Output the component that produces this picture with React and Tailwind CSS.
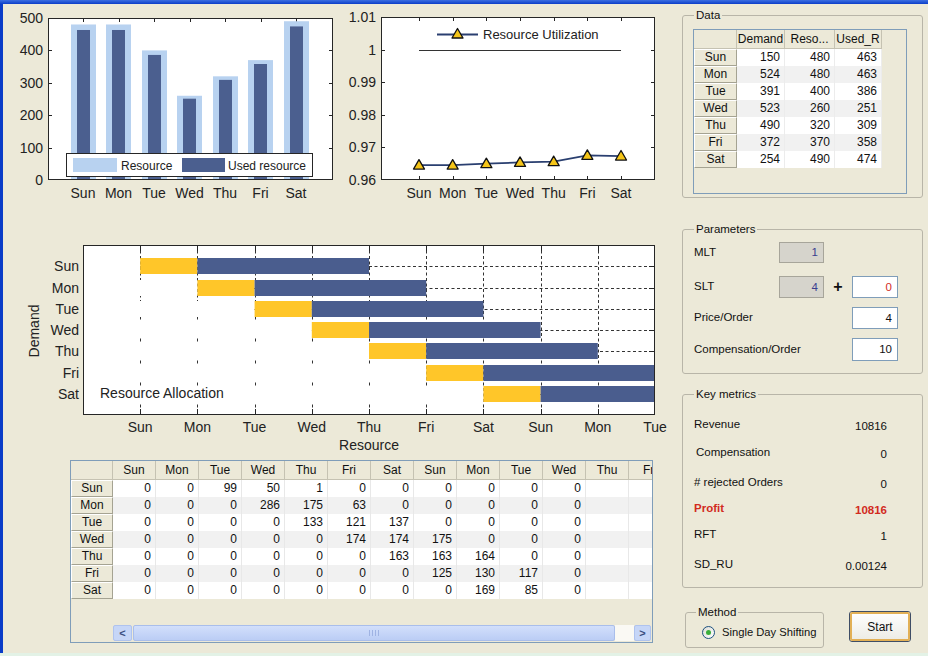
import React from "react";

const DAYS = ["Sun", "Mon", "Tue", "Wed", "Thu", "Fri", "Sat"];
const RESOURCE = [480, 480, 400, 260, 320, 370, 490];
const USED = [463, 463, 386, 251, 309, 358, 474];
const DEMAND = [150, 524, 391, 523, 490, 372, 254];

const ALLOC = [
  [0, 0, 99, 50, 1, 0, 0, 0, 0, 0, 0],
  [0, 0, 0, 286, 175, 63, 0, 0, 0, 0, 0],
  [0, 0, 0, 0, 133, 121, 137, 0, 0, 0, 0],
  [0, 0, 0, 0, 0, 174, 174, 175, 0, 0, 0],
  [0, 0, 0, 0, 0, 0, 163, 163, 164, 0, 0],
  [0, 0, 0, 0, 0, 0, 0, 125, 130, 117, 0],
  [0, 0, 0, 0, 0, 0, 0, 0, 169, 85, 0],
];
const ALLOC_COLS = ["Sun", "Mon", "Tue", "Wed", "Thu", "Fri", "Sat", "Sun", "Mon", "Tue", "Wed", "Thu", "Fri"];

const AXIS = "#262626";
const INK = "#222";
const px = (v) => Math.round(v) + 0.5;

function BarChart() {
  const L = 48, R = 333, T = 18, B = 180;
  const y = (v) => B - (v * (B - T)) / 500;
  const cx = (i) => 83 + i * 35.5;
  return (
    <svg width={337} height={201} viewBox="3 4 337 201" className="block shrink-0">
      <rect x={L} y={T} width={R - L} height={B - T} fill="#fff" />
      {[100, 200, 300, 400].map((v) => (
        <g key={v} stroke={AXIS}>
          <line x1={L} x2={L + 4} y1={px(y(v))} y2={px(y(v))} />
          <line x1={R - 4} x2={R} y1={px(y(v))} y2={px(y(v))} />
        </g>
      ))}
      {DAYS.map((d, i) => (
        <line key={d} x1={px(cx(i))} x2={px(cx(i))} y1={T} y2={T + 4} stroke={AXIS} />
      ))}
      {RESOURCE.map((v, i) => (
        <rect key={"r" + i} x={Math.round(cx(i) - 12.5)} y={y(v)} width={25} height={B - y(v)} fill="#B8D2F0" />
      ))}
      {USED.map((v, i) => (
        <rect key={"u" + i} x={Math.round(cx(i) - 6.5)} y={y(v)} width={13} height={B - y(v)} fill="#4B5F8F" />
      ))}
      {/* legend */}
      <rect x={66.5} y={153.5} width={246} height={23} fill="#fff" stroke={AXIS} />
      <rect x={73} y={158} width={44} height={14} fill="#B8D2F0" />
      <text x={121} y={170} fontSize={12} fill={INK}>Resource</text>
      <rect x={182} y={158} width={43} height={14} fill="#4B5F8F" />
      <text x={228} y={170} fontSize={12} fill={INK}>Used resource</text>
      <rect x={L + 0.5} y={T + 0.5} width={R - L - 1} height={B - T - 1} fill="none" stroke={AXIS} />
      {[0, 100, 200, 300, 400, 500].map((v) => (
        <text key={v} x={43} y={y(v) + 5} fontSize={14} fill={INK} textAnchor="end">{v}</text>
      ))}
      {DAYS.map((d, i) => (
        <text key={d} x={cx(i)} y={198} fontSize={14} fill={INK} textAnchor="middle">{d}</text>
      ))}
    </svg>
  );
}

function Marker({ x, y }) {
  return (
    <polygon
      points={`${x},${y - 5.5} ${x - 5.5},${y + 4} ${x + 5.5},${y + 4}`}
      fill="#F5C518"
      stroke="#111"
      strokeWidth={1.3}
      strokeLinejoin="round"
    />
  );
}

function LineChart() {
  const L = 381, R = 655, T = 17, B = 180;
  const y = (v) => B - ((v - 0.96) / 0.05) * (B - T);
  const cx = (i) => 419 + i * 33.67;
  const util = USED.map((v, i) => v / RESOURCE[i]);
  const ticks = [0.96, 0.97, 0.98, 0.99, 1, 1.01];
  const pts = util.map((u, i) => `${cx(i)},${y(u)}`).join(" ");
  return (
    <svg width={332} height={201} viewBox="340 4 332 201" className="block shrink-0">
      <rect x={L} y={T} width={R - L} height={B - T} fill="#fff" />
      {ticks.slice(1, 5).map((v) => (
        <g key={v} stroke={AXIS}>
          <line x1={L} x2={L + 4} y1={px(y(v))} y2={px(y(v))} />
          <line x1={R - 4} x2={R} y1={px(y(v))} y2={px(y(v))} />
        </g>
      ))}
      {DAYS.map((d, i) => (
        <g key={d} stroke={AXIS}>
          <line x1={px(cx(i))} x2={px(cx(i))} y1={T} y2={T + 4} />
          <line x1={px(cx(i))} x2={px(cx(i))} y1={B - 4} y2={B} />
        </g>
      ))}
      <line x1={cx(0)} x2={cx(6)} y1={px(y(1))} y2={px(y(1))} stroke="#333" />
      <polyline points={pts} fill="none" stroke="#2A3F70" strokeWidth={1.8} />
      {util.map((u, i) => (
        <Marker key={i} x={cx(i)} y={y(u)} />
      ))}
      {/* legend */}
      <line x1={437} x2={478} y1={34.5} y2={34.5} stroke="#2A3F70" strokeWidth={1.8} />
      <Marker x={457.5} y={34} />
      <text x={483} y={39} fontSize={13} fill={INK}>Resource Utilization</text>
      <rect x={L + 0.5} y={T + 0.5} width={R - L - 1} height={B - T - 1} fill="none" stroke={AXIS} />
      {ticks.map((v) => (
        <text key={v} x={376} y={y(v) + 5} fontSize={14} fill={INK} textAnchor="end">{String(v)}</text>
      ))}
      {DAYS.map((d, i) => (
        <text key={d} x={cx(i)} y={198} fontSize={14} fill={INK} textAnchor="middle">{d}</text>
      ))}
    </svg>
  );
}

function Gantt() {
  const L = 83, R = 655, T = 245, B = 415;
  const X = (u) => L + (u * (R - L)) / 10;
  const Y = (r) => T + (r * (B - T)) / 8;
  const H = 16;
  const xTicks = ["Sun", "Mon", "Tue", "Wed", "Thu", "Fri", "Sat", "Sun", "Mon", "Tue"];
  const inner = [1, 2, 3, 4, 5, 6, 7, 8, 9];
  return (
    <svg width={669} height={250} viewBox="3 205 669 250" className="block shrink-0">
      <defs>
        <clipPath id="gantt-plot">
          <rect x={L} y={T} width={R - L} height={B - T} />
        </clipPath>
      </defs>
      <rect x={L} y={T} width={R - L} height={B - T} fill="#fff" />
      <g clipPath="url(#gantt-plot)">
        {inner.map((u) => (
          <line key={"v" + u} x1={px(X(u))} x2={px(X(u))} y1={T} y2={B} stroke="#333" strokeDasharray="3 2.5" />
        ))}
        {DAYS.map((d, i) => (
          <line key={"h" + d} x1={L} x2={R} y1={px(Y(i + 1))} y2={px(Y(i + 1))} stroke="#333" strokeDasharray="3 2.5" />
        ))}
        {inner.map((u) => (
          <g key={"t" + u} stroke={AXIS}>
            <line x1={px(X(u))} x2={px(X(u))} y1={T} y2={T + 6} />
            <line x1={px(X(u))} x2={px(X(u))} y1={B - 6} y2={B} />
          </g>
        ))}
        {DAYS.map((d, i) => (
          <line key={"rt" + d} x1={R - 6} x2={R} y1={px(Y(i + 1))} y2={px(Y(i + 1))} stroke={AXIS} />
        ))}
        {DAYS.map((d, i) => {
          const r = i + 1;
          const top = Math.round(Y(r) - H / 2);
          return (
            <g key={"b" + d}>
              <rect x={L} y={top} width={X(r) - L} height={H} fill="#fff" />
              <rect x={X(r)} y={top} width={X(r + 1) - X(r)} height={H} fill="#FFC629" />
              <rect x={X(r + 1)} y={top} width={X(r + 4) - X(r + 1)} height={H} fill="#4A5D8E" />
            </g>
          );
        })}
      </g>
      <text x={100} y={398} fontSize={14} fill={INK}>Resource Allocation</text>
      <rect x={L + 0.5} y={T + 0.5} width={R - L - 1} height={B - T - 1} fill="none" stroke={AXIS} />
      {DAYS.map((d, i) => (
        <text key={"yl" + d} x={79} y={Y(i + 1) + 5} fontSize={14} fill={INK} textAnchor="end">{d}</text>
      ))}
      {xTicks.map((d, i) => (
        <text key={"xl" + i} x={X(i + 1)} y={432} fontSize={14} fill={INK} textAnchor="middle">{d}</text>
      ))}
      <text x={369} y={450} fontSize={14} fill={INK} textAnchor="middle">Resource</text>
      <text x={0} y={0} fontSize={14} fill={INK} textAnchor="middle" transform="translate(39 331) rotate(-90)">Demand</text>
    </svg>
  );
}

function RowHead({ children, w }) {
  return (
    <div className={`${w} shrink-0 h-full flex items-center justify-center bg-[#ECE9D8] border-t border-l border-t-white border-l-white border-r border-b border-r-[#A5A392] border-b-[#A5A392]`}>
      {children}
    </div>
  );
}

function DataTable() {
  const widths = ["w-[48px]", "w-[50px]", "w-[47px]"];
  const heads = ["Demand", "Reso...", "Used_R"];
  return (
    <div className="ml-[10px] mt-[7px] w-[214px] h-[165px] border border-[#7F9DB9] bg-[#ECE9D8] flex flex-col overflow-hidden text-[12px] text-[#111]">
      <div className="flex h-[19px] shrink-0">
        <div className="w-[43px] shrink-0 border-r border-b border-[#C5C2B2]" />
        {heads.map((h, i) => (
          <div key={h} className={`${widths[i]} shrink-0 flex items-center justify-center border-r border-b border-[#C5C2B2]`}>
            {h}
          </div>
        ))}
      </div>
      {DAYS.map((d, r) => (
        <div key={d} className="flex h-[17px] shrink-0 leading-[17px]">
          <RowHead w="w-[43px]">{d}</RowHead>
          {[DEMAND[r], RESOURCE[r], USED[r]].map((v, i) => (
            <div
              key={i}
              className={`${widths[i]} shrink-0 text-right pr-[4px] border-r border-[#ECECEC] ${r % 2 ? "bg-[#F1F1F1]" : "bg-white"}`}
            >
              {v}
            </div>
          ))}
        </div>
      ))}
    </div>
  );
}

function AllocTable() {
  return (
    <div className="ml-[67px] mt-[5px] w-[583px] h-[183px] border border-[#7F9DB9] bg-[#ECE9D8] flex flex-col overflow-hidden text-[12px] text-[#111]">
      <div className="flex h-[19px] shrink-0 overflow-hidden">
        <div className="w-[42px] shrink-0 border-r border-b border-[#C5C2B2]" />
        {ALLOC_COLS.map((h, i) => (
          <div key={i} className="w-[43px] shrink-0 flex items-center justify-center border-r border-b border-[#C5C2B2]">
            {h}
          </div>
        ))}
      </div>
      {DAYS.map((d, r) => (
        <div key={d} className="flex h-[17px] shrink-0 leading-[17px] overflow-hidden">
          <RowHead w="w-[42px]">{d}</RowHead>
          {ALLOC_COLS.map((c, i) => (
            <div
              key={i}
              className={`w-[43px] shrink-0 text-right pr-[4px] border-r border-[#E8E8E8] ${r % 2 ? "bg-[#F1F1F1]" : "bg-white"}`}
            >
              {i < ALLOC[r].length ? ALLOC[r][i] : ""}
            </div>
          ))}
        </div>
      ))}
      <div className="flex-1" />
      <div className="flex h-[16px] shrink-0 mb-[1px]">
        <div className="w-[42px] shrink-0" />
        <div className="w-[19px] shrink-0 rounded-[2px] border border-[#AFC3EE] bg-[#C6D6F7] flex items-center justify-center text-[#3B4E7E] text-[11px] font-bold">
          &lt;
        </div>
        <div className="w-[482px] shrink-0 ml-[1px] rounded-[2px] border border-[#A9BEEB] bg-gradient-to-b from-[#D2DFFB] to-[#BBCDF5] flex items-center justify-center">
          <div className="flex gap-[2px]">
            <span className="w-[1px] h-[6px] bg-[#9FB3E3]" />
            <span className="w-[1px] h-[6px] bg-[#9FB3E3]" />
            <span className="w-[1px] h-[6px] bg-[#9FB3E3]" />
            <span className="w-[1px] h-[6px] bg-[#9FB3E3]" />
          </div>
        </div>
        <div className="w-[19px] shrink-0 bg-[#FAF9F4]" />
        <div className="w-[17px] shrink-0 rounded-[2px] border border-[#AFC3EE] bg-[#C6D6F7] flex items-center justify-center text-[#3B4E7E] text-[11px] font-bold">
          &gt;
        </div>
      </div>
    </div>
  );
}

function Group({ title, className, legendClass = "ml-[11px]", children }) {
  return (
    <fieldset className={`border border-[#B8B5A8] rounded-[3px] p-0 ${className}`}>
      <legend className={`${legendClass} px-[2px] text-[11.5px] leading-[14px] text-[#111]`}>{title}</legend>
      {children}
    </fieldset>
  );
}

function Metric({ label, value, mt, labelMl = "ml-[11px]", red }) {
  const tone = red ? "text-[#D22B1E] font-bold" : "text-[#111]";
  return (
    <div className={`${mt} h-[20px] flex items-center w-[204px] justify-between text-[11.5px] ${tone}`}>
      <span className={labelMl}>{label}</span>
      <span className="pt-[4px]">{value}</span>
    </div>
  );
}

export default function App() {
  return (
    <div className="w-[928px] h-[656px] bg-[#ECE9D8] flex flex-col overflow-hidden font-['Liberation_Sans',Arial,sans-serif]">
      <div className="h-[4px] shrink-0 bg-gradient-to-b from-[#3D6FE2] to-[#0A3CC8]" />
      <div className="flex flex-1 min-h-0">
        <div className="w-[3px] shrink-0 bg-[#0A3CC8]" />
        <div className="w-[669px] shrink-0 flex flex-col">
          <div className="flex h-[201px] shrink-0">
            <BarChart />
            <LineChart />
          </div>
          <Gantt />
          <AllocTable />
        </div>
        <div className="flex-1 flex flex-col">
          <Group title="Data" className="ml-[10px] mt-[4px] w-[241px] h-[190px]">
            <DataTable />
          </Group>

          <Group title="Parameters" className="ml-[10px] mt-[24px] w-[241px] h-[152px] text-[11.5px] text-[#111]">
            <div className="mt-[6px] h-[21px] flex items-center ml-[11px]">
              <span className="w-[85px]">MLT</span>
              <div className="w-[45px] h-full bg-[#D6D4CC] border border-[#A7A59A] text-right pr-[5px] leading-[19px] text-[#3A3D8F]">1</div>
            </div>
            <div className="mt-[13px] h-[22px] flex items-center ml-[11px]">
              <span className="w-[85px]">SLT</span>
              <div className="w-[45px] h-full bg-[#D6D4CC] border border-[#A7A59A] text-right pr-[5px] leading-[20px] text-[#3A3D8F]">4</div>
              <span className="w-[28px] text-center text-[16px] font-bold">+</span>
              <div className="w-[46px] h-full bg-white border border-[#7F9DB9] text-right pr-[5px] leading-[20px] text-[#D22B1E]">0</div>
            </div>
            <div className="mt-[9px] h-[22px] flex items-center ml-[11px]">
              <span className="w-[158px]">Price/Order</span>
              <div className="w-[46px] h-full bg-white border border-[#7F9DB9] text-right pr-[5px] leading-[20px]">4</div>
            </div>
            <div className="mt-[9px] h-[23px] flex items-center ml-[11px]">
              <span className="w-[158px]">Compensation/Order</span>
              <div className="w-[46px] h-full bg-white border border-[#7F9DB9] text-right pr-[5px] leading-[21px]">10</div>
            </div>
          </Group>

          <Group title="Key metrics" className="ml-[10px] mt-[13px] w-[241px] h-[201px]">
            <Metric label="Revenue" value="10816" mt="mt-[14px]" />
            <Metric label="Compensation" value="0" mt="mt-[8px]" labelMl="ml-[13px]" />
            <Metric label="# rejected Orders" value="0" mt="mt-[10px]" />
            <Metric label="Profit" value="10816" mt="mt-[6px]" red />
            <Metric label="RFT" value="1" mt="mt-[6px]" />
            <Metric label="SD_RU" value="0.00124" mt="mt-[10px]" />
          </Group>

          <div className="flex items-start mt-[17px]">
            <Group title="Method" className="ml-[13px] w-[139px] h-[43px]" legendClass="ml-[10px]">
              <div className="mt-[7px] ml-[16px] flex items-center h-[13px] text-[11.2px] text-[#111]">
                <span className="w-[13px] h-[13px] shrink-0 rounded-full border border-[#1C5180] bg-gradient-to-br from-[#DCDCD4] to-white flex items-center justify-center">
                  <span className="w-[5px] h-[5px] rounded-full bg-[#3AAE3A]" />
                </span>
                <span className="ml-[7px] whitespace-nowrap">Single Day Shifting</span>
              </div>
            </Group>
            <button className="ml-[25px] mt-[6px] w-[62px] h-[31px] rounded-[3px] border border-[#3F4E66] bg-gradient-to-b from-white to-[#ECEBE4] p-0">
              <div className="w-full h-full rounded-[2px] border-2 border-[#E2B056] flex items-center justify-center text-[12px] text-[#111]">
                Start
              </div>
            </button>
          </div>
        </div>
      </div>
      <div className="h-[3px] shrink-0 bg-[#E3F2E6]" />
    </div>
  );
}
